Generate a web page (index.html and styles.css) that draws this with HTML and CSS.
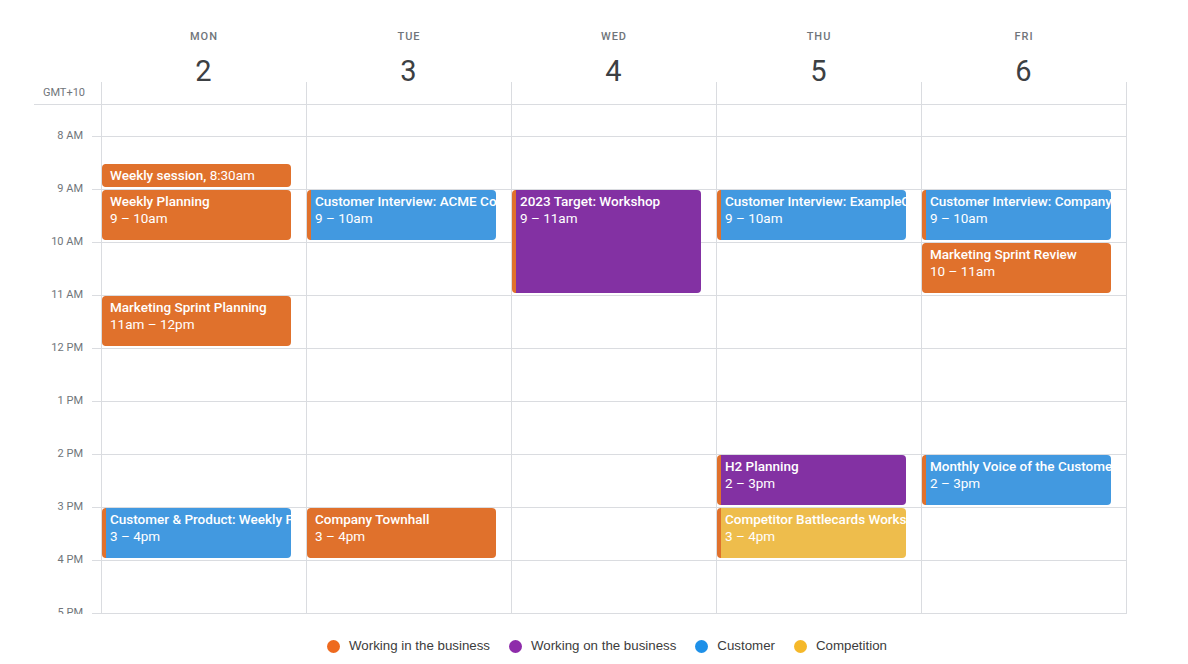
FILE: index.html
```html
<!DOCTYPE html>
<html>
<head>
<meta charset="utf-8">
<link rel="stylesheet" href="styles.css">
</head>
<body>
<div class="cal">
  <div class="head">
    <div class="gutter"></div>
    <div class="dayhead"><div class="dname">MON</div><div class="dnum">2</div></div>
    <div class="dayhead"><div class="dname">TUE</div><div class="dnum">3</div></div>
    <div class="dayhead"><div class="dname">WED</div><div class="dnum">4</div></div>
    <div class="dayhead"><div class="dname">THU</div><div class="dnum">5</div></div>
    <div class="dayhead"><div class="dname">FRI</div><div class="dnum">6</div></div>
  </div>
  <div class="allday">
    <div class="tz">GMT+10</div>
    <div class="adcell"></div>
    <div class="adcell"></div>
    <div class="adcell"></div>
    <div class="adcell"></div>
    <div class="adcell last"></div>
  </div>
  <div class="body">
    <div class="times">
      <div class="spacer"></div>
      <div class="hour"><span class="label">8 AM</span><span class="tick"></span></div>
      <div class="hour"><span class="label">9 AM</span><span class="tick"></span></div>
      <div class="hour"><span class="label">10 AM</span><span class="tick"></span></div>
      <div class="hour"><span class="label">11 AM</span><span class="tick"></span></div>
      <div class="hour"><span class="label">12 PM</span><span class="tick"></span></div>
      <div class="hour"><span class="label">1 PM</span><span class="tick"></span></div>
      <div class="hour"><span class="label">2 PM</span><span class="tick"></span></div>
      <div class="hour"><span class="label">3 PM</span><span class="tick"></span></div>
      <div class="hour"><span class="label">4 PM</span><span class="tick"></span></div>
      <div class="hour"><span class="label">5 PM</span><span class="tick"></span></div>
    </div>
    <div class="col">
      <div class="ev orange" style="top:58.5px;height:23.5px"><div class="title">Weekly session, <span class="reg">8:30am</span></div></div>
      <div class="ev orange" style="top:85px;height:50px"><div class="title">Weekly Planning</div><div class="time">9 – 10am</div></div>
      <div class="ev orange" style="top:191px;height:50px"><div class="title">Marketing Sprint Planning</div><div class="time">11am – 12pm</div></div>
      <div class="ev blue" style="top:403px;height:50px"><div class="title">Customer &amp; Product: Weekly Product Sync</div><div class="time">3 – 4pm</div></div>
    </div>
    <div class="col">
      <div class="ev blue" style="top:85px;height:50px"><div class="title">Customer Interview: ACME Corp</div><div class="time">9 – 10am</div></div>
      <div class="ev orange" style="top:403px;height:50px"><div class="title">Company Townhall</div><div class="time">3 – 4pm</div></div>
    </div>
    <div class="col">
      <div class="ev purple" style="top:85px;height:103px"><div class="title">2023 Target: Workshop</div><div class="time">9 – 11am</div></div>
    </div>
    <div class="col">
      <div class="ev blue" style="top:85px;height:50px"><div class="title">Customer Interview: ExampleCo</div><div class="time">9 – 10am</div></div>
      <div class="ev purple" style="top:350px;height:50px"><div class="title">H2 Planning</div><div class="time">2 – 3pm</div></div>
      <div class="ev yellow" style="top:403px;height:50px"><div class="title">Competitor Battlecards Workshop</div><div class="time">3 – 4pm</div></div>
    </div>
    <div class="col last">
      <div class="ev blue" style="top:85px;height:50px"><div class="title">Customer Interview: Company X</div><div class="time">9 – 10am</div></div>
      <div class="ev orange" style="top:138px;height:50px"><div class="title">Marketing Sprint Review</div><div class="time">10 – 11am</div></div>
      <div class="ev blue" style="top:350px;height:50px"><div class="title">Monthly Voice of the Customer</div><div class="time">2 – 3pm</div></div>
    </div>
  </div>
  <div class="legend">
    <div class="item"><span class="dot d-orange"></span>Working in the business</div>
    <div class="item"><span class="dot d-purple"></span>Working on the business</div>
    <div class="item"><span class="dot d-blue"></span>Customer</div>
    <div class="item"><span class="dot d-yellow"></span>Competition</div>
  </div>
</div>
</body>
</html>
```

FILE: styles.css
```css
html, body {
  margin: 0;
  padding: 0;
  background: #ffffff;
}
body {
  font-family: Roboto, "Liberation Sans", Arial, sans-serif;
  width: 1188px;
  height: 664px;
  overflow: hidden;
}
.cal {
  display: flex;
  flex-direction: column;
}
.head {
  display: flex;
  height: 82px;
}
.gutter {
  width: 101px;
  flex: none;
}
.dayhead {
  width: 205px;
  flex: none;
  display: flex;
  flex-direction: column;
  align-items: center;
  padding-top: 29px;
  box-sizing: border-box;
}
.dname {
  font-size: 11px;
  line-height: 16px;
  font-weight: 500;
  letter-spacing: 1px;
  color: #70757a;
  padding-left: 1px;
}
.dnum {
  margin-top: 10px;
  font-size: 29px;
  line-height: 32px;
  font-weight: 400;
  color: #3c4043;
}
.allday {
  display: flex;
  height: 23px;
  box-sizing: border-box;
  border-bottom: 1px solid #dadce0;
  margin-left: 34px;
  width: 1093px;
}
.tz {
  width: 67px;
  flex: none;
  box-sizing: border-box;
  text-align: right;
  padding-right: 16px;
  padding-top: 3px;
  font-size: 11px;
  line-height: 16px;
  color: #70757a;
}
.adcell {
  width: 205px;
  flex: none;
  box-sizing: border-box;
  border-left: 1px solid #dadce0;
}
.adcell.last {
  width: 206px;
  border-right: 1px solid #dadce0;
}
.body {
  display: flex;
  height: 509px;
  overflow: hidden;
}
.times {
  width: 101px;
  flex: none;
  display: flex;
  flex-direction: column;
}
.spacer {
  height: 31px;
  flex: none;
}
.hour {
  height: 53px;
  flex: none;
  display: flex;
  align-items: flex-start;
}
.label {
  width: 92px;
  box-sizing: border-box;
  padding-right: 9px;
  text-align: right;
  font-size: 11px;
  line-height: 14px;
  margin-top: -7px;
  color: #70757a;
}
.tick {
  width: 9px;
  border-top: 1px solid #dadce0;
}
.col {
  position: relative;
  width: 205px;
  flex: none;
  box-sizing: border-box;
  border-left: 1px solid #dadce0;
  background-image: repeating-linear-gradient(to bottom, #dadce0 0px, #dadce0 1px, transparent 1px, transparent 53px);
  background-position: 0 31px;
}
.col.last {
  width: 206px;
  border-right: 1px solid #dadce0;
}
.ev {
  position: absolute;
  left: 0;
  width: 189px;
  box-sizing: border-box;
  border-left: 4px solid #e0712c;
  border-radius: 4px;
  padding: 3px 0 0 4px;
  color: #ffffff;
  font-size: 13.5px;
  line-height: 16.5px;
  overflow: hidden;
  white-space: nowrap;
}
.title {
  font-weight: 500;
}
.reg {
  font-weight: 400;
}
.time {
  font-weight: 400;
}
.orange { background: #e0712c; }
.blue { background: #4299e0; }
.purple { background: #8331a3; }
.yellow { background: #eebd4c; }
.legend {
  display: flex;
  justify-content: center;
  gap: 19px;
  margin-top: 24px;
  padding-left: 26px;
  font-family: "Liberation Sans", Arial, sans-serif;
  font-size: 13.3px;
  line-height: 16px;
  color: #3c3c3c;
}
.item {
  display: flex;
  align-items: center;
  gap: 9px;
}
.dot {
  width: 13px;
  height: 13px;
  border-radius: 50%;
  display: inline-block;
}
.d-orange { background: #ee6a1f; }
.d-purple { background: #8e2baa; }
.d-blue { background: #1e90e8; }
.d-yellow { background: #f5b82a; }
```
